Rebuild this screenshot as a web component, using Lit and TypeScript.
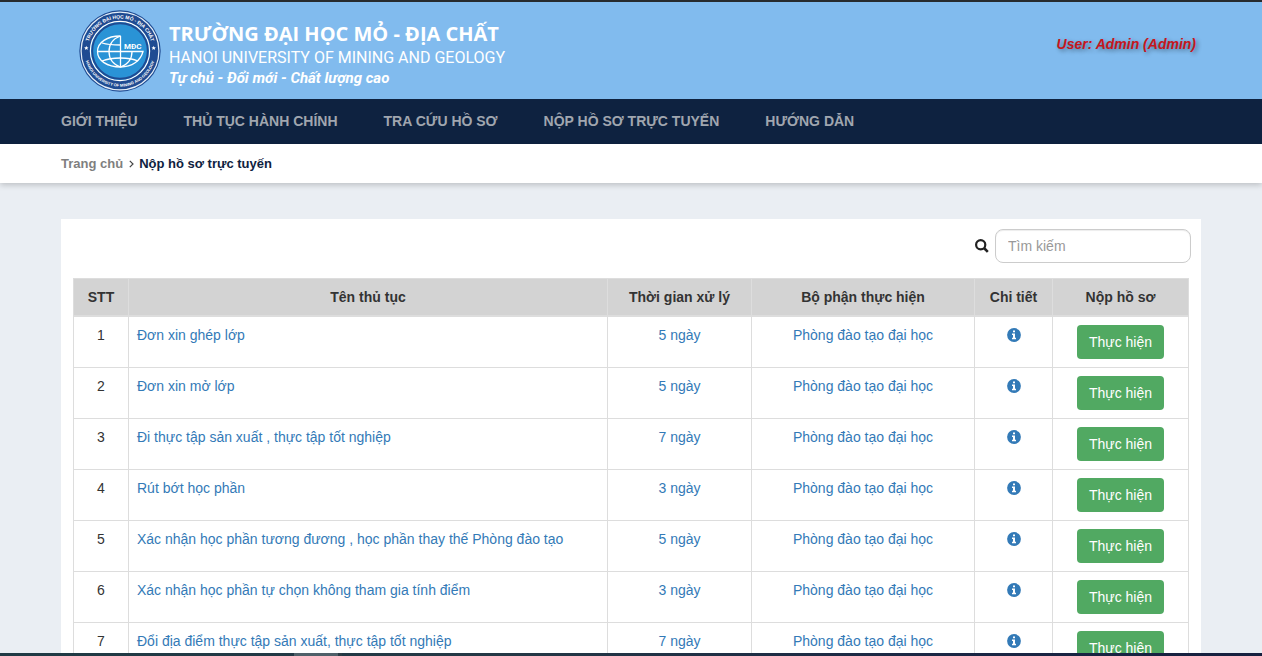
import { LitElement, html, css } from "lit";
import { customElement, state } from "lit/decorators.js";

interface Procedure {
  name: string;
  days: number;
  unit: string;
}

const UNIT = "Phòng đào tạo đại học";

const PROCEDURES: Procedure[] = [
  { name: "Đơn xin ghép lớp", days: 5, unit: UNIT },
  { name: "Đơn xin mở lớp", days: 5, unit: UNIT },
  { name: "Đi thực tập sản xuất , thực tập tốt nghiệp", days: 7, unit: UNIT },
  { name: "Rút bớt học phần", days: 3, unit: UNIT },
  { name: "Xác nhận học phần tương đương , học phần thay thế Phòng đào tạo", days: 5, unit: UNIT },
  { name: "Xác nhận học phần tự chọn không tham gia tính điểm", days: 3, unit: UNIT },
  { name: "Đổi địa điểm thực tập sản xuất, thực tập tốt nghiệp", days: 7, unit: UNIT },
];

const MENU = ["Giới thiệu", "Thủ tục hành chính", "Tra cứu hồ sơ", "Nộp hồ sơ trực tuyến", "Hướng dẫn"];

@customElement("university-seal")
export class UniversitySeal extends LitElement {
  static styles = css`
    :host {
      display: block;
      flex: none;
      width: 82px;
      height: 82px;
    }
    .seal {
      display: block;
      width: 100%;
      height: 100%;
    }
    .ring-text {
      font-family: "Liberation Sans", Arial, sans-serif;
      font-weight: 700;
      fill: #fff;
    }
    .upper {
      font-size: 5px;
    }
    .lower {
      font-size: 4px;
    }
    .mark {
      font-family: "Roboto", sans-serif;
      font-size: 8px;
      font-weight: 700;
      fill: #fff;
    }
  `;

  render() {
    return html`
      <svg class="seal" viewBox="0 0 82 82" role="img" aria-label="Trường Đại học Mỏ - Địa chất">
        <defs>
          <path id="upper-arc" d="M8.500 41 A32.500 32.500 0 0 1 73.500 41" />
          <path id="lower-arc" d="M5.300 41 A35.700 35.700 0 0 0 76.700 41" />
        </defs>
        <circle cx="41" cy="41" r="40.7" fill="#1f4b92" />
        <circle cx="41" cy="41" r="38.9" fill="none" stroke="#e4eef8" stroke-width="1.2" />
        <circle cx="41" cy="41" r="29.6" fill="#2a93d6" stroke="#fff" stroke-width="1.2" />
        <circle cx="41" cy="41" r="27.8" fill="none" stroke="#1f4b92" stroke-width="1.9" />
        <text class="ring-text upper">
          <textPath href="#upper-arc" startOffset="50%" text-anchor="middle">TRƯỜNG ĐẠI HỌC MỎ - ĐỊA CHẤT</textPath>
        </text>
        <text class="ring-text lower">
          <textPath href="#lower-arc" startOffset="50%" text-anchor="middle">HANOI UNIVERSITY OF MINING AND GEOLOGY</textPath>
        </text>
        <g fill="#fff">
          <path id="star" d="M7.300 35.800l.6 1.500 1.600.1-1.200 1 .4 1.600-1.400-.9-1.400.9.4-1.600-1.200-1 1.600-.1z" />
          <use href="#star" x="67.400" />
        </g>
        <g fill="none" stroke="#fff" stroke-width="1.3">
          <path d="M41.500 26 C28 26 18.500 32.500 18.500 41.500 C18.500 50.500 28 57 41.500 57 C53 57 61.500 51 64 41.500 H18.500" />
          <path d="M41.500 26 V57" />
          <path d="M41.500 26 C33 29 30 35 30 41.500 C30 48 33 54 41.500 57 C50 54 53 48 53 41.500" />
          <path d="M23 33 C28 34.500 35 35 41.500 35" />
          <path d="M23 51 C33 47 50 47 59 51" />
        </g>
        <text class="mark" x="45" y="39">MĐC</text>
      </svg>
    `;
  }
}

@customElement("app-root")
export class AppRoot extends LitElement {
  @state() private query = "";

  static styles = css`
    :host {
      display: flex;
      flex-direction: column;
      height: 100vh;
      box-sizing: border-box;
      overflow: hidden;
      border-top: 2px solid #272b2e;
      background: #eaeef3;
      color: #333;
      font-family: "Liberation Sans", Arial, sans-serif;
      font-size: 14px;
      line-height: 20px;
    }
    * {
      box-sizing: border-box;
    }
    a {
      color: #337ab7;
      text-decoration: none;
    }
    .container {
      width: 100%;
      max-width: 1140px;
      margin: 0 auto;
    }
    .banner {
      flex: none;
      background: #81bbee;
    }
    .banner-inner {
      display: flex;
      align-items: center;
      gap: 8px;
      padding: 8px 5px 7px 18px;
    }
    .titles {
      flex: 1;
      padding-top: 6px;
      color: #fff;
      font-family: "Roboto", sans-serif;
      white-space: nowrap;
    }
    .school {
      margin: 0;
      font-family: "Open Sans", "Noto Sans", sans-serif;
      font-size: 20px;
      line-height: 28px;
      font-weight: 700;
    }
    .school-en {
      margin: 0;
      font-size: 16px;
      line-height: 20px;
      font-weight: 400;
    }
    .motto {
      margin: 0;
      font-size: 15px;
      line-height: 20px;
      font-weight: 700;
      font-style: italic;
    }
    .user {
      align-self: flex-start;
      margin: 24px 0 0;
      color: #c5161d;
      font-weight: 700;
      font-style: italic;
      text-shadow: 2px 2px 4px rgba(0, 0, 0, 0.4);
    }
    .menu {
      flex: none;
      background: #0e2240;
    }
    .menu-list {
      display: flex;
      gap: 46px;
      padding: 12px 0 13px;
      list-style: none;
    }
    .menu-link {
      color: #a0a6af;
      font-weight: 700;
      text-transform: uppercase;
    }
    .crumbs {
      flex: none;
      background: #fff;
      box-shadow: 0 2px 6px rgba(0, 0, 0, 0.2);
    }
    .crumb-list {
      display: flex;
      align-items: center;
      padding: 10px 0 9px;
      list-style: none;
      font-size: 13px;
      font-weight: 700;
    }
    .crumb {
      display: flex;
      align-items: center;
      color: #0e2240;
    }
    .crumb-link {
      color: #7f7f7f;
    }
    .chevron {
      width: 5px;
      height: 8px;
      margin: 0 5px 0 6px;
    }
    .content {
      flex: 1;
      min-height: 0;
      overflow: hidden;
      padding-top: 36px;
    }
    .panel {
      min-height: 100%;
      padding: 10px 12px;
      background: #fff;
    }
    .search {
      display: flex;
      justify-content: flex-end;
      align-items: center;
      gap: 6px;
      margin: 0 -2px 15px 0;
    }
    .search-label {
      display: flex;
    }
    .search-icon {
      width: 14px;
      height: 14px;
    }
    .search-box {
      width: 196px;
      height: 34px;
      padding: 6px 12px;
      border: 1px solid #ccc;
      border-radius: 8px;
      background: #fff;
      box-shadow: inset 0 1px 1px rgba(0, 0, 0, 0.075);
      color: #555;
      font: inherit;
    }
    .search-box::placeholder {
      color: #999;
      opacity: 1;
    }
    .grid {
      width: 100%;
      border-collapse: collapse;
      table-layout: fixed;
    }
    .grid th,
    .grid td {
      padding: 8px;
      border: 1px solid #ddd;
      text-align: center;
      vertical-align: top;
    }
    .grid th {
      border-bottom-width: 2px;
      background: #d3d3d3;
      font-weight: 700;
    }
    .grid td.name {
      text-align: left;
    }
    .c-no {
      width: 55px;
    }
    .c-time {
      width: 144px;
    }
    .c-unit {
      width: 223px;
    }
    .c-info {
      width: 78px;
    }
    .c-action {
      width: 136px;
    }
    .info {
      display: inline-flex;
      vertical-align: top;
      padding-top: 3px;
    }
    .info-icon {
      width: 14px;
      height: 14px;
    }
    .run {
      display: block;
      height: 34px;
      margin: 0 auto;
      padding: 6px 12px;
      border: 0;
      border-radius: 4px;
      background: #51a962;
      color: #fff;
      font: inherit;
      cursor: pointer;
    }
    .taskbar {
      flex: none;
      display: flex;
      height: 3px;
      padding-left: 294px;
      background: linear-gradient(90deg, #1f3a44, #243845 40%, #1a2644 75%, #16203f);
    }
    .task {
      width: 48px;
      border-right: 4px solid #2c3c45;
      background: #4f6069;
    }
  `;

  private onSearch(e: Event) {
    this.query = (e.target as HTMLInputElement).value;
  }

  render() {
    const needle = this.query.trim().toLowerCase();
    const rows = PROCEDURES.filter((p) => p.name.toLowerCase().includes(needle));
    return html`
      <header class="banner">
        <div class="container banner-inner">
          <university-seal></university-seal>
          <div class="titles">
            <h1 class="school">TRƯỜNG ĐẠI HỌC MỎ - ĐỊA CHẤT</h1>
            <p class="school-en">HANOI UNIVERSITY OF MINING AND GEOLOGY</p>
            <p class="motto">Tự chủ - Đổi mới - Chất lượng cao</p>
          </div>
          <p class="user">User: Admin (Admin)</p>
        </div>
      </header>

      <nav class="menu" aria-label="Menu">
        <ul class="container menu-list">
          ${MENU.map((label) => html`<li><a class="menu-link" href="#">${label}</a></li>`)}
        </ul>
      </nav>

      <nav class="crumbs" aria-label="Breadcrumb">
        <ol class="container crumb-list">
          <li class="crumb"><a class="crumb-link" href="#">Trang chủ</a></li>
          <li class="crumb" aria-current="page">
            <svg class="chevron" viewBox="0 0 5 8" aria-hidden="true">
              <path d="M.8.8 4 4 .8 7.200" fill="none" stroke="#444" stroke-width="1.2" />
            </svg>
            Nộp hồ sơ trực tuyến
          </li>
        </ol>
      </nav>

      <main class="content">
        <section class="container panel">
          <div class="search">
            <label class="search-label" for="search" aria-label="Tìm kiếm">
              <svg class="search-icon" viewBox="0 0 14 14" aria-hidden="true">
                <circle cx="5.700" cy="5.700" r="4.600" fill="none" stroke="#222" stroke-width="2.200" />
                <path d="M9 9 12.800 12.800" stroke="#222" stroke-width="2.600" />
              </svg>
            </label>
            <input
              id="search"
              class="search-box"
              type="text"
              placeholder="Tìm kiếm"
              .value=${this.query}
              @input=${this.onSearch}
            />
          </div>

          <table class="grid">
            <colgroup>
              <col class="c-no" />
              <col />
              <col class="c-time" />
              <col class="c-unit" />
              <col class="c-info" />
              <col class="c-action" />
            </colgroup>
            <thead>
              <tr>
                <th scope="col">STT</th>
                <th scope="col">Tên thủ tục</th>
                <th scope="col">Thời gian xử lý</th>
                <th scope="col">Bộ phận thực hiện</th>
                <th scope="col">Chi tiết</th>
                <th scope="col">Nộp hồ sơ</th>
              </tr>
            </thead>
            <tbody>
              ${rows.map(
                (p, i) => html`
                  <tr>
                    <td>${i + 1}</td>
                    <td class="name"><a href="#">${p.name}</a></td>
                    <td><a href="#">${p.days} ngày</a></td>
                    <td><a href="#">${p.unit}</a></td>
                    <td>
                      <a class="info" href="#" aria-label="Chi tiết">
                        <svg class="info-icon" viewBox="0 0 14 14" aria-hidden="true">
                          <circle cx="7" cy="7" r="6.900" fill="#337ab7" />
                          <path
                            d="M6 2.500h2v1.800H6zM5 5.600h3v4.100h1v1.500H5V9.700h1V7.100H5z"
                            fill="#fff"
                          />
                        </svg>
                      </a>
                    </td>
                    <td><button class="run" type="button">Thực hiện</button></td>
                  </tr>
                `
              )}
            </tbody>
          </table>
        </section>
      </main>

      <footer class="taskbar"><div class="task"></div></footer>
    `;
  }
}
